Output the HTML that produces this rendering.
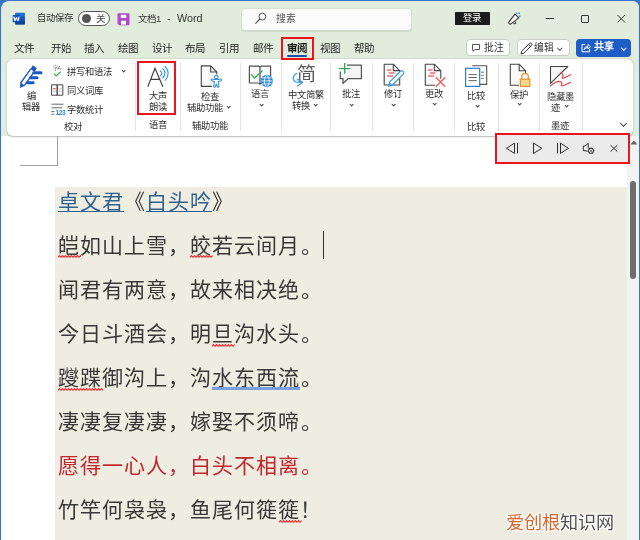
<!DOCTYPE html>
<html lang="zh-CN">
<head>
<meta charset="utf-8">
<style>
*{margin:0;padding:0;box-sizing:border-box}
html,body{width:640px;height:540px;overflow:hidden;background:#fff}
body{position:relative;font-family:"Liberation Sans",sans-serif;color:#242424;will-change:transform}
.a{position:absolute}
.t{position:absolute;white-space:nowrap;line-height:1}
svg{position:absolute;overflow:visible}
#frame{left:0;top:0;width:640px;height:540px;border-left:1px solid #3a72d0;border-top:1px solid #3a72d0;border-right:1.5px solid #3a72d0}
#head{left:1px;top:1px;width:638px;height:135px;background:#e1ecdc;border-radius:8px 6px 0 0}
#ribbon{left:7px;top:59px;width:626px;height:76.5px;background:#fff;border-radius:6px;box-shadow:0 0.8px 1.6px rgba(0,0,0,.28)}
#doc{left:1px;top:136px;width:626px;height:404px;background:#fff}
#sb{left:627px;top:136px;width:12px;height:404px;background:#f3f3f3}
#page{left:55px;top:186.5px;width:572px;height:354px;background:#efede1}
.tab{font-size:10.5px;top:42.6px;color:#262626}
.ui{font-size:9.3px;color:#2c2c2c;margin-top:-0.5px}
.sep{position:absolute;top:63px;width:1px;height:68px;background:#e3e3e3}
.chev{position:absolute;width:4px;height:4px;border-right:1px solid #444;border-bottom:1px solid #444;transform:rotate(45deg)}
.poem{position:absolute;left:58px;font-family:"Liberation Serif",serif;font-size:21px;letter-spacing:1px;line-height:1;color:#383838;white-space:nowrap}
.pd{position:relative;left:1px;top:-0.5px}
.lk{color:#30628f;text-decoration:underline;text-decoration-thickness:1.4px;text-underline-offset:2.2px}
.btn{position:absolute;top:39.3px;height:17.2px;border:1px solid #c9cdc7;border-radius:4px;background:#fff}
</style>
</head>
<body>
<div class="a" style="left:0;top:0;width:640px;height:14px;background:#3a72d0"></div>
<div id="head" class="a"></div>
<div id="doc" class="a"></div>
<div id="sb" class="a"></div>
<div id="page" class="a"></div>
<div id="ribbon" class="a"></div>

<!-- ===== title bar ===== -->
<svg style="left:12px;top:12px" width="14" height="14" viewBox="0 0 14 14">
  <rect x="3.1" y="0.7" width="9.8" height="11.8" rx="0.8" fill="#1b6fd6"/>
  <rect x="3.1" y="4.6" width="9.8" height="4" fill="#1558bf"/>
  <rect x="3.1" y="8.4" width="9.8" height="4.1" rx="0.8" fill="#0d3f9a"/>
  <rect x="0.7" y="2.9" width="7.5" height="7.4" rx="0.6" fill="#1651b8"/>
  <path d="M1.7 4.5L3 8.9L4.45 5.4L5.9 8.9L7.2 4.5" fill="none" stroke="#fff" stroke-width="1.15" stroke-linejoin="bevel"/>
</svg>
<div class="t ui" style="left:37px;top:14.3px;font-size:9.3px;color:#333">自动保存</div>
<div class="a" style="left:78px;top:10.5px;width:31.5px;height:15px;border:1px solid #555;border-radius:8px;background:#fff"></div>
<div class="a" style="left:81.5px;top:13.5px;width:9px;height:9px;border-radius:50%;background:#555"></div>
<div class="t" style="left:96px;top:13.8px;font-size:9.5px;color:#444">关</div>
<svg style="left:117px;top:12.5px" width="13" height="12.5" viewBox="0 0 13 12.5">
  <path d="M0.5 1.2Q0.5 0.3 1.4 0.3H11.6Q12.5 0.3 12.5 1.2V11.3Q12.5 12.2 11.6 12.2H2L0.5 10.7Z" fill="#b14bc9"/>
  <rect x="3.8" y="1.8" width="5.4" height="3.2" fill="#fff"/>
  <rect x="4" y="7.8" width="5" height="3.8" fill="#fff"/>
</svg>
<div class="t ui" style="left:138px;top:14.2px;font-size:9.4px;color:#333">文档1</div>
<div class="t ui" style="left:167.3px;top:14.3px;font-size:10px;color:#333">-</div>
<div class="t ui" style="left:177px;top:13.5px;font-size:10.8px;color:#333">Word</div>

<div class="a" style="left:240.5px;top:7.5px;width:171px;height:23px;background:#fafbfa;border:1px solid #d8ddd6;border-radius:4px;box-shadow:0 1px 0.5px rgba(0,0,0,.08)"></div>
<svg style="left:254px;top:12px" width="13" height="13" viewBox="0 0 13 13">
  <circle cx="8.4" cy="4.6" r="3.4" fill="none" stroke="#555" stroke-width="1"/>
  <path d="M6 7L1.4 11.6" stroke="#555" stroke-width="1.1"/>
</svg>
<div class="t" style="left:276px;top:14px;font-size:9.8px;color:#505050">搜索</div>

<div class="a" style="left:455px;top:11.8px;width:34.5px;height:13.4px;background:#1c1c1c;border-radius:1px"></div>
<div class="t" style="left:462.5px;top:14.2px;font-size:9.3px;color:#fff">登录</div>
<svg style="left:506px;top:10px" width="16" height="16" viewBox="0 0 16 16">
  <path d="M2.6 12.4L9 4.2L12.8 7.9L4.5 14.1Q3.2 14.6 2.6 12.4Z" fill="#fff" stroke="#333" stroke-width="1.1" stroke-linejoin="round"/>
  <path d="M7.2 12.6Q7.6 14.6 9.8 13.4L9.4 11.6" fill="none" stroke="#333" stroke-width="1"/>
  <circle cx="10.7" cy="3.4" r="0.85" fill="#3a9be0"/><circle cx="13.2" cy="3.2" r="0.85" fill="#3a9be0"/><circle cx="13.7" cy="6.2" r="0.85" fill="#3a9be0"/>
</svg>
<div class="a" style="left:545.5px;top:18.3px;width:8px;height:1px;background:#333"></div>
<div class="a" style="left:581px;top:15px;width:8px;height:8px;border:1px solid #333;border-radius:1px"></div>
<svg style="left:617px;top:15px" width="9" height="9" viewBox="0 0 9 9"><path d="M0.5 0L8 7.5M8 0L0.5 7.5" stroke="#333" stroke-width="1"/></svg>

<!-- ===== tabs ===== -->
<div class="t tab" style="left:13.5px">文件</div>
<div class="t tab" style="left:50.5px">开始</div>
<div class="t tab" style="left:84px">插入</div>
<div class="t tab" style="left:117.5px">绘图</div>
<div class="t tab" style="left:151.5px">设计</div>
<div class="t tab" style="left:185px">布局</div>
<div class="t tab" style="left:218.5px">引用</div>
<div class="t tab" style="left:252.5px">邮件</div>
<div class="t tab" style="left:286.5px;font-weight:bold;color:#1a1a1a">审阅</div>
<div class="a" style="left:287px;top:55.3px;width:19.5px;height:2px;background:#1d4fb0;border-radius:1px"></div>
<div class="t tab" style="left:320px">视图</div>
<div class="t tab" style="left:353.5px">帮助</div>

<div class="btn" style="left:465.8px;width:44.5px"></div>
<svg style="left:471.5px;top:44px" width="8" height="8" viewBox="0 0 8 8"><path d="M0.5 0.5H7.5V5.5H3L1 7.4V5.5H0.5Z" fill="none" stroke="#444" stroke-width="0.9" stroke-linejoin="round"/></svg>
<div class="t ui" style="left:483.5px;top:43.5px;font-size:9.8px;color:#333">批注</div>
<div class="btn" style="left:516.5px;width:53px"></div>
<svg style="left:519.5px;top:41.5px" width="13" height="13" viewBox="0 0 13 13"><path d="M1 12L1.8 9L9.5 1.3Q10.5 0.4 11.5 1.4Q12.5 2.4 11.6 3.4L3.9 11.1Z M8.5 2.3L10.6 4.4" fill="none" stroke="#333" stroke-width="1" stroke-linejoin="round"/></svg>
<div class="t ui" style="left:534px;top:43.5px;font-size:9.8px;color:#333">编辑</div>
<div class="chev" style="left:558px;top:45.5px;width:3.5px;height:3.5px;border-color:#555"></div>
<div class="a" style="left:575.5px;top:38.8px;width:55px;height:18.2px;background:#1e5cc6;border-radius:4px"></div>
<svg style="left:580.5px;top:43.2px" width="10" height="10" viewBox="0 0 10 10"><path d="M4 1.5H1V8.8H8.6V6" fill="none" stroke="#fff" stroke-width="1"/><path d="M3 6.8Q3.5 3.4 7 3.2V1.4L9.4 3.7L7 6V4.3Q4.6 4.4 3 6.8Z" fill="none" stroke="#fff" stroke-width="0.9" stroke-linejoin="round"/></svg>
<div class="t" style="left:593.5px;top:42.2px;font-size:10px;color:#fff;font-weight:bold">共享</div>
<div class="chev" style="left:622px;top:45.5px;width:3.5px;height:3.5px;border-color:#fff"></div>

<!-- ===== ribbon ===== -->
<div class="sep" style="left:135px"></div>
<div class="sep" style="left:179.5px"></div>
<div class="sep" style="left:240px"></div>
<div class="sep" style="left:281px"></div>
<div class="sep" style="left:330px"></div>
<div class="sep" style="left:371.5px"></div>
<div class="sep" style="left:412.5px"></div>
<div class="sep" style="left:454px"></div>
<div class="sep" style="left:497.8px"></div>
<div class="sep" style="left:538.5px"></div>
<div class="sep" style="left:582px"></div>

<!-- 编辑器 -->
<svg style="left:18px;top:63px" width="26" height="26" viewBox="0 0 26 26">
  <path d="M2.7 20L12.6 6.2M6.3 22.6L16.2 8.8" stroke="#1a56c4" stroke-width="1.3"/>
  <path d="M12.4 6L16.4 9L18.9 5.2L14.9 2.2Z" fill="#1a56c4"/>
  <path d="M2.2 24.6L2.5 19.7L6.6 22.7Z" fill="#1a56c4" stroke="#1a56c4" stroke-width="0.6" stroke-linejoin="round"/>
  <path d="M15.8 9.8H22.9M12.6 14.8H19M9.2 19.8H15.1" stroke="#1a56c4" stroke-width="3.1" stroke-linecap="round"/>
</svg>
<div class="t ui" style="left:26.5px;top:92.5px">编</div>
<div class="t ui" style="left:22.3px;top:103.5px">辑器</div>

<!-- 校对 small buttons -->
<svg style="left:52px;top:65px" width="13" height="13" viewBox="0 0 13 13">
  <text x="0.5" y="5.2" font-size="5.4" fill="#666" font-family="Liberation Sans">字A</text>
  <path d="M2 8.6L4.2 11L8.6 6.8" fill="none" stroke="#3aa757" stroke-width="1.2"/>
</svg>
<div class="t ui" style="left:66.5px;top:68px">拼写和语法</div>
<div class="chev" style="left:121.7px;top:69px;width:3.3px;height:3.3px"></div>
<svg style="left:51px;top:83.5px" width="13" height="12" viewBox="0 0 13 12">
  <path d="M0.6 0.8H6.2V11.2H0.6Z M6.2 0.8H11.8V11.2H6.2Z" fill="none" stroke="#444" stroke-width="1"/>
  <path d="M2 4.8H4.8" stroke="#e03a3a" stroke-width="1"/><path d="M2 7.2H4.8M7.6 4.8H10.4M7.6 7.2H10.4" stroke="#aaa" stroke-width="0.8"/>
</svg>
<div class="t ui" style="left:66.5px;top:87px">同义词库</div>
<svg style="left:51px;top:102.8px" width="14" height="12" viewBox="0 0 14 12">
  <path d="M0.5 1.2H12.5M0.5 4.8H11M0.5 8.6H3.5M0.5 11.2H3" stroke="#555" stroke-width="0.9"/>
  <text x="4.6" y="11.8" font-size="6.6" font-weight="bold" fill="#2b8ad8" font-family="Liberation Sans" letter-spacing="-0.5">123</text>
</svg>
<div class="t ui" style="left:66.5px;top:106px">字数统计</div>
<div class="t ui" style="left:63.8px;top:123.5px">校对</div>

<!-- 大声朗读 -->
<svg style="left:146px;top:64px" width="26" height="24" viewBox="0 0 26 24">
  <path d="M1.8 22.8L9 4.2L16.9 22.8M4.4 15.4H13.7" fill="none" stroke="#404040" stroke-width="1.15"/>
  <path d="M14.3 6.7Q17.3 9.3 14.3 11.8M16.7 4.4Q21.3 9.3 16.7 14M19.2 2.3Q25.2 9.3 19.2 16.3" fill="none" stroke="#3d9ce0" stroke-width="1.2" stroke-linecap="round"/>
</svg>
<div class="t ui" style="left:148.5px;top:92.5px">大声</div>
<div class="t ui" style="left:148.5px;top:103.8px">朗读</div>
<div class="t ui" style="left:148.5px;top:121.5px">语音</div>

<!-- 辅助功能 -->
<svg style="left:199px;top:64px" width="26" height="25" viewBox="0 0 26 25">
  <path d="M13 22.4H2.3V1.9H11.7L17.8 8V10.6" fill="#fafafa" stroke="#444" stroke-width="1.1" stroke-linejoin="round"/>
  <path d="M11.7 1.9V8H17.8" fill="none" stroke="#444" stroke-width="1.1" stroke-linejoin="round"/>
  <path d="M12.2 15.9Q12.2 14.9 13.2 15L16 15.5H18.6L21.4 15Q22.4 14.9 22.4 15.9Q22.4 16.8 21.5 17L19.2 17.6L19.9 22.2Q19.9 23.2 19 23.2Q18.4 23.2 18.2 22.4L17.3 20L16.4 22.4Q16.2 23.2 15.6 23.2Q14.7 23.2 14.7 22.2L15.4 17.6L13.1 17Q12.2 16.8 12.2 15.9Z" fill="#fff" stroke="#2b8ad8" stroke-width="1.05" stroke-linejoin="round"/>
  <circle cx="17.3" cy="13" r="1.75" fill="#fff" stroke="#2b8ad8" stroke-width="1.05"/>
</svg>
<div class="t ui" style="left:200.5px;top:93.5px">检查</div>
<div class="t ui" style="left:187.2px;top:104.2px">辅助功能</div>
<div class="chev" style="left:227px;top:105px;width:3.3px;height:3.3px"></div>
<div class="t ui" style="left:192px;top:122.5px">辅助功能</div>

<!-- 语言 -->
<svg style="left:248px;top:64px" width="27" height="24" viewBox="0 0 27 24">
  <path d="M12 3Q11 2.1 10 2.1H1.4V19H10Q11 19 12 20.3Q13 19 14 19H15M12 3Q13 2.1 14 2.1H22.6V12M12 3V20.3" fill="#f8f8f8" stroke="#505050" stroke-width="1.2" stroke-linejoin="round"/>
  <path d="M3.2 10.4L6.6 14L14.6 6.5" fill="none" stroke="#3aa757" stroke-width="1.3"/>
  <circle cx="18.8" cy="16.9" r="6.1" fill="#2b8ad8"/>
  <path d="M13.2 16.9H24.4M14 13.9H23.6M14 19.9H23.6" stroke="#fff" stroke-width="0.8"/>
  <ellipse cx="18.8" cy="16.9" rx="2.4" ry="5.4" fill="none" stroke="#fff" stroke-width="0.8"/>
</svg>
<div class="t ui" style="left:251.3px;top:90.5px">语言</div>
<div class="chev" style="left:259.5px;top:102.5px;width:3.3px;height:3.3px"></div>

<!-- 中文简繁转换 -->
<div class="t" style="left:297.3px;top:65.3px;font-size:19px;color:#5a5a5a">简</div>
<div class="a" style="left:292px;top:75px;width:6px;height:6px;background:#fff"></div>
<svg style="left:291px;top:72px" width="14" height="16" viewBox="0 0 14 16">
  <path d="M5.9 1.3Q1.8 3.8 2.3 6.6Q2.8 10.2 7 10.2H11.5" fill="none" stroke="#3a9be0" stroke-width="1.2" stroke-linecap="round"/>
  <path d="M6.4 7.4L11.7 10.2L6.4 14" fill="none" stroke="#3a9be0" stroke-width="1.2" stroke-linecap="round" stroke-linejoin="round"/>
</svg>
<div class="t ui" style="left:287.8px;top:91.5px">中文简繁</div>
<div class="t ui" style="left:292px;top:102.5px">转换</div>
<div class="chev" style="left:314px;top:102.5px;width:3.3px;height:3.3px"></div>

<!-- 批注 -->
<svg style="left:338px;top:62px" width="25" height="23" viewBox="0 0 25 23">
  <path d="M2.3 3.2H23.4V16.7H10L5 21.5V16.7H2.3Z" fill="#f5f5f5"/>
  <path d="M9 3.2H23.4V16.7H10L5 21.5V16.7H2.3V9.6" fill="none" stroke="#555" stroke-width="1.2" stroke-linejoin="round"/>
  <path d="M6.7 0V12.5M0 6.6H13.4" stroke="#fff" stroke-width="3.6"/>
  <path d="M6.7 1V11.7M1.1 6.6H12.4" stroke="#30a850" stroke-width="1.35"/>
</svg>
<div class="t ui" style="left:341.8px;top:90.5px">批注</div>
<div class="chev" style="left:350.3px;top:102.7px;width:3.3px;height:3.3px"></div>

<!-- 修订 -->
<svg style="left:383px;top:63px" width="23" height="25" viewBox="0 0 23 25">
  <path d="M1.2 1.2H10.3L16.7 7.6V22H1.2Z" fill="#fafafa" stroke="#444" stroke-width="1.1" stroke-linejoin="round"/>
  <path d="M10.3 1.2V7.6H16.7" fill="none" stroke="#444" stroke-width="1.1" stroke-linejoin="round"/>
  <path d="M4 7H8.5M6 10H11.5M4 13H10" stroke="#f07070" stroke-width="1.5"/>
  <path d="M5.6 23.2L6.6 19.2L17.4 8.4Q18.8 7 20.2 8.4Q21.6 9.8 20.2 11.2L9.4 22Z" fill="#fff" stroke="#3a9be0" stroke-width="1.2" stroke-linejoin="round"/>
  <path d="M5.6 23.2L6.6 19.2L9.4 22Z" fill="#3a9be0"/>
</svg>
<div class="t ui" style="left:383.6px;top:90.5px">修订</div>
<div class="chev" style="left:391.7px;top:102.7px;width:3.3px;height:3.3px"></div>

<!-- 更改 -->
<svg style="left:424px;top:63px" width="23" height="25" viewBox="0 0 23 25">
  <path d="M11 22.2H1.3V1.2H10.3L16.8 7.6V15.8" fill="#fafafa" stroke="#444" stroke-width="1.1" stroke-linejoin="round"/>
  <path d="M10.3 1.2V7.6H16.8" fill="none" stroke="#444" stroke-width="1.1" stroke-linejoin="round"/>
  <path d="M4 7H8.5M6 10H11.5M4 13H10" stroke="#f07070" stroke-width="1.5"/>
  <path d="M11.8 14.2L21.3 23.7M21.3 14.2L11.8 23.7" stroke="#f05a5a" stroke-width="1.3"/>
</svg>
<div class="t ui" style="left:424.5px;top:90.5px">更改</div>
<div class="chev" style="left:432.6px;top:102.2px;width:3.3px;height:3.3px"></div>

<!-- 比较 -->
<svg style="left:464px;top:64px" width="24" height="24" viewBox="0 0 24 24">
  <path d="M8.2 1.8H22.7V20.4H15.6" fill="none" stroke="#555" stroke-width="1.1"/>
  <path d="M17 8.2H20M17 11.3H20M17 14.3H20" stroke="#666" stroke-width="0.9"/>
  <rect x="1.6" y="4.3" width="14.1" height="18.1" fill="#fff" stroke="#2b7cd3" stroke-width="1.2"/>
  <path d="M4.6 10.6H12.7M4.6 13.5H12.7M4.6 16.6H12.7" stroke="#555" stroke-width="0.9"/>
</svg>
<div class="t ui" style="left:467.2px;top:92.5px">比较</div>
<div class="chev" style="left:475.6px;top:104px;width:3.3px;height:3.3px"></div>
<div class="t ui" style="left:467.2px;top:123.5px">比较</div>

<!-- 保护 -->
<svg style="left:509px;top:63px" width="22" height="25" viewBox="0 0 22 25">
  <path d="M10 22.2H1.3V1.2H10.2L16.6 7.8V10" fill="#fafafa" stroke="#444" stroke-width="1.1" stroke-linejoin="round"/>
  <path d="M10.2 1.2V7.8H16.6" fill="none" stroke="#444" stroke-width="1.1" stroke-linejoin="round"/>
  <path d="M12.9 16.2V13.6Q12.9 10.4 16.1 10.4Q19.3 10.4 19.3 13.6V16.2" fill="none" stroke="#e8902a" stroke-width="1.2"/>
  <rect x="11.4" y="16.2" width="9.4" height="7.2" fill="#fad88a" stroke="#e8902a" stroke-width="1.2"/>
</svg>
<div class="t ui" style="left:509.7px;top:91px">保护</div>
<div class="chev" style="left:517.6px;top:102.2px;width:3.3px;height:3.3px"></div>

<!-- 隐藏墨迹 -->
<svg style="left:549px;top:65px" width="23" height="23" viewBox="0 0 23 23">
  <path d="M1.5 1.5H18.8L1.5 18.3Z" fill="#f5f5f5" stroke="#444" stroke-width="1.1" stroke-linejoin="round"/>
  <path d="M12.1 8Q15 9.5 13.5 12Q12.5 13.8 15 13L21.6 9.7" fill="none" stroke="#ee3a42" stroke-width="1.25" stroke-linecap="round"/>
  <path d="M1.3 21.1Q7 16 11 16.5Q13.5 17 12.5 19.5Q12 21.5 15 20.5L21.6 17.2" fill="none" stroke="#ee3a42" stroke-width="1.25" stroke-linecap="round"/>
</svg>
<div class="t ui" style="left:546.6px;top:93.2px">隐藏墨</div>
<div class="t ui" style="left:551.2px;top:104.5px">迹</div>
<div class="chev" style="left:564.6px;top:104.3px;width:3.3px;height:3.3px"></div>
<div class="t ui" style="left:550.5px;top:122.2px">墨迹</div>
<div class="chev" style="left:620.5px;top:121px;width:5px;height:5px;border-width:1.3px"></div>

<!-- red highlight boxes -->
<div class="a" style="left:280.5px;top:37.4px;width:33.5px;height:22.6px;border:2px solid #e8161c"></div>
<div class="a" style="left:137px;top:60.6px;width:39px;height:54px;border:2px solid #e8161c"></div>

<!-- page corner mark -->
<div class="a" style="left:57px;top:136px;width:1px;height:29.5px;background:#a0a0a0"></div>
<div class="a" style="left:20px;top:164.8px;width:38px;height:1px;background:#a0a0a0"></div>

<!-- read aloud toolbar -->
<div class="a" style="left:495px;top:132.6px;width:135.2px;height:31px;background:#ebebeb;border:2px solid #e8161c"></div>
<svg style="left:505px;top:142px" width="15" height="13" viewBox="0 0 15 13">
  <path d="M1.5 6.3L9.5 1.1V11.4Z" fill="none" stroke="#2e2e2e" stroke-width="1" stroke-linejoin="round"/>
  <path d="M12.5 1.1V11.4" stroke="#2e2e2e" stroke-width="1"/>
</svg>
<svg style="left:532px;top:142px" width="11" height="13" viewBox="0 0 11 13">
  <path d="M1.5 1.1L9.8 6.3L1.5 11.4Z" fill="none" stroke="#2e2e2e" stroke-width="1" stroke-linejoin="round"/>
</svg>
<svg style="left:556px;top:142px" width="14" height="13" viewBox="0 0 14 13">
  <path d="M4.5 1.1L12.4 6.3L4.5 11.4Z" fill="none" stroke="#2e2e2e" stroke-width="1" stroke-linejoin="round"/>
  <path d="M1.5 1.1V11.4" stroke="#2e2e2e" stroke-width="1"/>
</svg>
<svg style="left:582px;top:142px" width="14" height="13" viewBox="0 0 14 13">
  <path d="M5.6 9.6L3 8.6H1.3V4H3L6.2 1.2V6.4" fill="none" stroke="#2e2e2e" stroke-width="1" stroke-linejoin="round"/>
  <path d="M7.6 6.4H10.4L11.8 8.8L10.4 11.2H7.6L6.2 8.8Z" fill="none" stroke="#2e2e2e" stroke-width="1.1" stroke-linejoin="round"/>
  <circle cx="9" cy="8.8" r="0.9" fill="#2e2e2e"/>
</svg>
<svg style="left:610px;top:145px" width="8" height="7" viewBox="0 0 8 7"><path d="M0.5 0.2L7.3 6.6M7.3 0.2L0.5 6.6" stroke="#2e2e2e" stroke-width="1"/></svg>

<!-- scrollbar -->
<svg style="left:630px;top:139.5px" width="8" height="5" viewBox="0 0 8 5"><path d="M0.4 4.6L3.9 0.5L7.4 4.6Z" fill="#666"/></svg>
<div class="a" style="left:629.5px;top:180.5px;width:6.5px;height:98px;background:#6e6e6e;border-radius:3.2px"></div>

<!-- ===== poem ===== -->
<div class="poem" style="top:192px"><span class="lk">卓文君</span>《<span class="lk">白头吟</span>》</div>
<div class="poem" style="top:236px">皑如山上雪，皎若云间月<span class="pd">。</span></div>
<div class="poem" style="top:280px">闻君有两意，故来相决绝<span class="pd">。</span></div>
<div class="poem" style="top:324px">今日斗酒会，明旦沟水头<span class="pd">。</span></div>
<div class="poem" style="top:368px">躞蹀御沟上，沟水东西流<span class="pd">。</span></div>
<div class="poem" style="top:412px">凄凄复凄凄，嫁娶不须啼<span class="pd">。</span></div>
<div class="poem" style="top:456px;color:#c0272d">愿得一心人，白头不相离<span class="pd">。</span></div>
<div class="poem" style="top:500px">竹竿何袅袅，鱼尾何簁簁！</div>
<div class="a" style="left:322.5px;top:231px;width:1.2px;height:28px;background:#333"></div>


<svg style="left:0;top:0" width="0" height="0"><defs>
<pattern id="sq" width="3" height="3" patternUnits="userSpaceOnUse"><path d="M0 2.4L1.5 0.6L3 2.4" fill="none" stroke="#e8242c" stroke-width="1.1"/></pattern>
</defs></svg>
<div class="a" style="left:57.5px;top:255px;width:22.5px;height:3px;background:transparent"><svg width="23" height="3" style="left:0;top:0"><rect width="23" height="3" fill="url(#sq)"/></svg></div>
<svg style="left:190px;top:255px" width="22.5" height="3"><rect width="22.5" height="3" fill="url(#sq)"/></svg>
<svg style="left:212px;top:343.5px" width="22.5" height="3"><rect width="22.5" height="3" fill="url(#sq)"/></svg>
<svg style="left:57.5px;top:387.5px" width="45" height="3"><rect width="45" height="3" fill="url(#sq)"/></svg>
<div class="a" style="left:212.2px;top:387.2px;width:87.5px;height:2.4px;background:#7a9ee0"></div>
<svg style="left:278.5px;top:519.5px" width="22.5" height="3"><rect width="22.5" height="3" fill="url(#sq)"/></svg>

<!-- watermark -->
<div class="t" style="left:506px;top:514px;font-size:18.2px;color:#d9662a;text-shadow:1px 0 0 #fff,-1px 0 0 #fff,0 1px 0 #fff,0 -1px 0 #fff,1px 1px 0 #fff,-1px -1px 0 #fff,1px -1px 0 #fff,-1px 1px 0 #fff,0 0 2px #fff">爱创根<span style="color:#505050">知识网</span></div>

<div id="frame" class="a"></div>
</body>
</html>
